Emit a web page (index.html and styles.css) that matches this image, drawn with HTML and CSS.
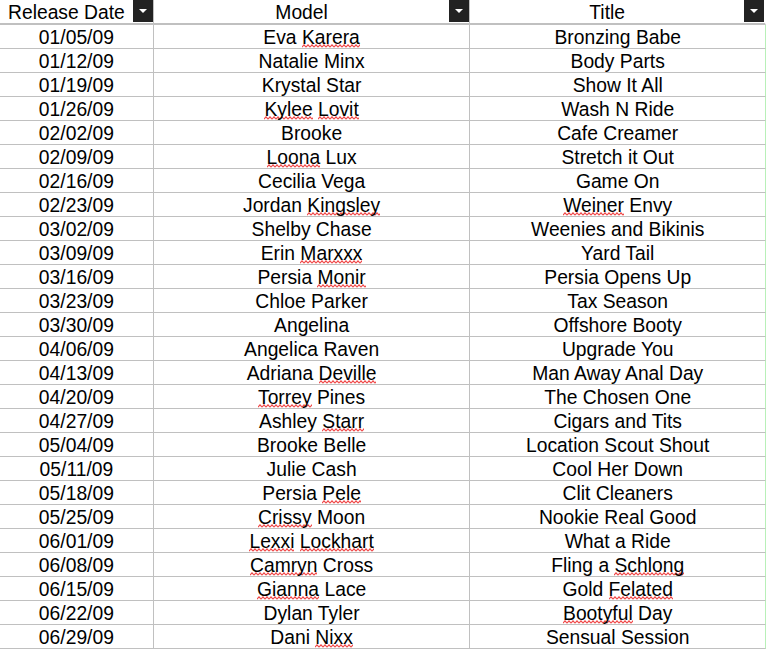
FILE: index.html
```html
<!DOCTYPE html>
<html>
<head>
<meta charset="utf-8">
<link rel="stylesheet" href="styles.css">
</head>
<body>
<div class="sheet">
  <div class="row head">
    <div class="cell c1"><span class="htext">Release Date</span><span class="dd"><svg width="20" height="22" viewBox="0 0 20 22"><path d="M6 9h8l-4 4z" fill="#fff"/></svg></span></div>
    <div class="cell c2"><span class="htext">Model</span><span class="dd"><svg width="20" height="22" viewBox="0 0 20 22"><path d="M6 9h8l-4 4z" fill="#fff"/></svg></span></div>
    <div class="cell c3"><span class="htext">Title</span><span class="dd"><svg width="20" height="22" viewBox="0 0 20 22"><path d="M6 9h8l-4 4z" fill="#fff"/></svg></span></div>
  </div>
  <div class="row"><div class="cell c1">01/05/09</div><div class="cell c2">Eva <span class="sp">Karera</span></div><div class="cell c3">Bronzing Babe</div></div>
  <div class="row"><div class="cell c1">01/12/09</div><div class="cell c2">Natalie Minx</div><div class="cell c3">Body Parts</div></div>
  <div class="row"><div class="cell c1">01/19/09</div><div class="cell c2">Krystal Star</div><div class="cell c3">Show It All</div></div>
  <div class="row"><div class="cell c1">01/26/09</div><div class="cell c2"><span class="sp">Kylee</span> <span class="sp">Lovit</span></div><div class="cell c3">Wash N Ride</div></div>
  <div class="row"><div class="cell c1">02/02/09</div><div class="cell c2">Brooke</div><div class="cell c3">Cafe Creamer</div></div>
  <div class="row"><div class="cell c1">02/09/09</div><div class="cell c2"><span class="sp">Loona</span> Lux</div><div class="cell c3">Stretch it Out</div></div>
  <div class="row"><div class="cell c1">02/16/09</div><div class="cell c2">Cecilia Vega</div><div class="cell c3">Game On</div></div>
  <div class="row"><div class="cell c1">02/23/09</div><div class="cell c2">Jordan <span class="sp">Kingsley</span></div><div class="cell c3"><span class="sp">Weiner</span> Envy</div></div>
  <div class="row"><div class="cell c1">03/02/09</div><div class="cell c2">Shelby Chase</div><div class="cell c3">Weenies and Bikinis</div></div>
  <div class="row"><div class="cell c1">03/09/09</div><div class="cell c2">Erin <span class="sp">Marxxx</span></div><div class="cell c3">Yard Tail</div></div>
  <div class="row"><div class="cell c1">03/16/09</div><div class="cell c2">Persia <span class="sp">Monir</span></div><div class="cell c3">Persia Opens Up</div></div>
  <div class="row"><div class="cell c1">03/23/09</div><div class="cell c2">Chloe Parker</div><div class="cell c3">Tax Season</div></div>
  <div class="row"><div class="cell c1">03/30/09</div><div class="cell c2">Angelina</div><div class="cell c3">Offshore Booty</div></div>
  <div class="row"><div class="cell c1">04/06/09</div><div class="cell c2">Angelica Raven</div><div class="cell c3">Upgrade You</div></div>
  <div class="row"><div class="cell c1">04/13/09</div><div class="cell c2">Adriana <span class="sp">Deville</span></div><div class="cell c3">Man Away Anal Day</div></div>
  <div class="row"><div class="cell c1">04/20/09</div><div class="cell c2"><span class="sp">Torrey</span> Pines</div><div class="cell c3">The Chosen One</div></div>
  <div class="row"><div class="cell c1">04/27/09</div><div class="cell c2">Ashley <span class="sp">Starr</span></div><div class="cell c3">Cigars and Tits</div></div>
  <div class="row"><div class="cell c1">05/04/09</div><div class="cell c2">Brooke Belle</div><div class="cell c3">Location Scout Shout</div></div>
  <div class="row"><div class="cell c1">05/11/09</div><div class="cell c2">Julie Cash</div><div class="cell c3">Cool Her Down</div></div>
  <div class="row"><div class="cell c1">05/18/09</div><div class="cell c2">Persia <span class="sp">Pele</span></div><div class="cell c3">Clit Cleaners</div></div>
  <div class="row"><div class="cell c1">05/25/09</div><div class="cell c2"><span class="sp">Crissy</span> Moon</div><div class="cell c3">Nookie Real Good</div></div>
  <div class="row"><div class="cell c1">06/01/09</div><div class="cell c2"><span class="sp">Lexxi</span> <span class="sp">Lockhart</span></div><div class="cell c3">What a Ride</div></div>
  <div class="row"><div class="cell c1">06/08/09</div><div class="cell c2"><span class="sp">Camryn</span> Cross</div><div class="cell c3">Fling a <span class="sp">Schlong</span></div></div>
  <div class="row"><div class="cell c1">06/15/09</div><div class="cell c2"><span class="sp">Gianna</span> Lace</div><div class="cell c3">Gold <span class="sp">Felated</span></div></div>
  <div class="row"><div class="cell c1">06/22/09</div><div class="cell c2">Dylan Tyler</div><div class="cell c3"><span class="sp">Bootyful</span> Day</div></div>
  <div class="row"><div class="cell c1">06/29/09</div><div class="cell c2">Dani <span class="sp">Nixx</span></div><div class="cell c3">Sensual Session</div></div>
</div>
</body>
</html>
```

FILE: styles.css
```css
html, body {
  margin: 0;
  padding: 0;
  background: #fff;
}
.sheet {
  width: 767px;
  font-family: "Liberation Sans", Arial, sans-serif;
  font-size: 19.3px;
  color: #000;
}
.row {
  display: flex;
  height: 24px;
  box-sizing: border-box;
  border-bottom: 1px solid #c0c0c0;
  width: 766px;
  border-right: 1px solid #b8f0b8;
}
.row.head {
  height: 25px;
  border-bottom: 2px solid #c0c0c0;
  border-right: 1px solid #fff;
}
.cell {
  box-sizing: border-box;
  height: 23px;
  padding-top: 2px;
  line-height: 21px;
  text-align: center;
  white-space: nowrap;
  overflow: hidden;
}
.c1 { width: 154px; border-right: 1px solid #c0c0c0; }
.c2 { width: 317px; border-right: 1px solid #c0c0c0; }
.c3 { width: 295px; }
.head .cell {
  display: flex;
  align-items: flex-start;
  padding-top: 0;
}
.head .c3 { padding-right: 1px; }
.htext {
  flex: 1;
  text-align: center;
  padding-top: 2px;
}
.dd {
  width: 20px;
  height: 22px;
  background: #222;
  display: block;
}
.dd svg { display: block; }
.sp {
  background-image: url("data:image/svg+xml,%3Csvg xmlns='http://www.w3.org/2000/svg' width='4' height='4'%3E%3Cpath d='M0 3.2L2 0.8L4 3.2' fill='none' stroke='%23f04848' stroke-width='1.1'/%3E%3C/svg%3E");
  background-repeat: repeat-x;
  background-position: left bottom;
  background-size: 4px 4px;
}
```
